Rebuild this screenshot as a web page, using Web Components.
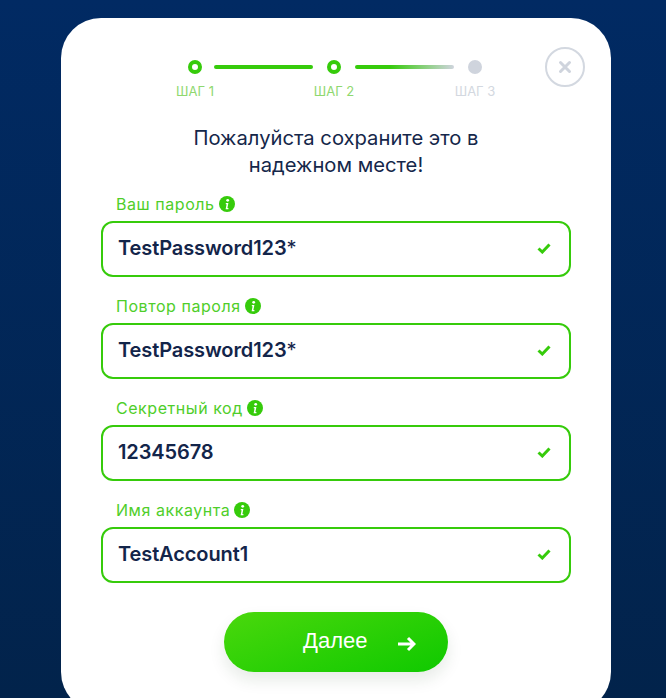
<!DOCTYPE html>
<html lang="ru">
<head>
<meta charset="utf-8">
<title>Шаг 2</title>
<style>
html, body {
    margin: 0;
    height: 698px;
    overflow: hidden;
}

body {
    background: linear-gradient(180deg, #012a63 0%, #02234b 100%);
    font-family: "Inter", "Noto Sans", sans-serif;
}
</style>
</head>
<body>
<wizard-card>
    <wizard-steps slot="top"></wizard-steps>
    <close-button slot="top"></close-button>
    <h-note>Пожалуйста сохраните это в<br>надежном месте!</h-note>
    <form-field label="Ваш пароль" value="TestPassword123" mark="*"></form-field>
    <form-field label="Повтор пароля" value="TestPassword123" mark="*"></form-field>
    <form-field label="Секретный код" value="12345678"></form-field>
    <form-field label="Имя аккаунта" value="TestAccount1"></form-field>
    <next-button>Далее</next-button>
</wizard-card>

<script>
const GREEN = "#36cb0b"

class WizardCard extends HTMLElement {
    constructor(){
        super();
        this.attachShadow({mode: "open"});
        this.shadowRoot.innerHTML = `<style>
:host {
    display: block;
    box-sizing: border-box;
    width: 550px;
    height: 694px;
    margin: 18px 0 0 61px;
    padding: 0 40px;
    background: #fff;
    border-radius: 40px;
}

.top {
    display: flex;
    justify-content: flex-end;
    height: 86px;
    padding-top: 29px;
    box-sizing: border-box;
}

.body {
    display: flex;
    flex-direction: column;
}
</style>
<div class="top"><slot name="top"></slot></div>
<div class="body"><slot></slot></div>`
    }
}

class WizardSteps extends HTMLElement {
    constructor(){
        super();
        this.attachShadow({mode: "open"});
        this.shadowRoot.innerHTML = `<style>
:host {
    display: grid;
    grid-template-columns: 14px 125px 14px 127px 14px;
    grid-template-rows: 14px auto;
    row-gap: 10px;
    align-items: center;
    justify-items: start;
    align-self: flex-start;
    margin: 13px 63px 0 0;
    font: 400 13px/15px "Inter", "Noto Sans", sans-serif;
}

.dot {
    box-sizing: border-box;
    width: 14px;
    height: 14px;
    border: 4px solid ${GREEN};
    border-radius: 50%;
}

.dot.off {
    border: 0;
    background: #cfd4dd;
}

.line {
    width: 99px;
    height: 4px;
    margin-left: 12px;
    border-radius: 2px;
    background: ${GREEN};
}

.line.fade {
    margin-left: 14px;
    background: linear-gradient(90deg, ${GREEN} 35%, #cfd4dd 100%);
}

.lbl {
    white-space: nowrap;
    color: #8fd86f;
    width: 14px;
    display: flex;
    justify-content: center;
}

.lbl.off {
    color: #d3d8e0;
}
</style>
<div class="dot"></div><div class="line"></div><div class="dot"></div><div class="line fade"></div><div class="dot off"></div>
<div class="lbl">ШАГ&nbsp;1</div><div></div><div class="lbl">ШАГ&nbsp;2</div><div></div><div class="lbl off">ШАГ&nbsp;3</div>`
    }
}

class CloseButton extends HTMLElement {
    constructor(){
        super();
        this.attachShadow({mode: "open"});
        this.shadowRoot.innerHTML = `<style>
:host {
    display: flex;
    align-items: center;
    justify-content: center;
    box-sizing: border-box;
    flex: none;
    width: 40px;
    height: 40px;
    margin: 0 -14px 0 0;
    border: 2px solid #d3d8e0;
    border-radius: 50%;
}
</style>
<svg width="14" height="14" viewBox="0 0 14 14"><path d="M2.5 2.5l9 9M11.5 2.5l-9 9" stroke="#cfd4dd" stroke-width="3" stroke-linecap="round" fill="none"/></svg>`
    }
}

class HNote extends HTMLElement {
    constructor(){
        super();
        this.attachShadow({mode: "open"});
        this.shadowRoot.innerHTML = `<style>
:host {
    display: block;
    height: 90px;
    padding-top: 20px;
    box-sizing: border-box;
    text-align: center;
    font: 400 20.2px/27px "Inter", "Noto Sans", sans-serif;
    color: #15274a;
}
</style>
<slot></slot>`
    }
}

class FormField extends HTMLElement {
    constructor(){
        super();
        this.attachShadow({mode: "open"});
        this.shadowRoot.innerHTML = `<style>
:host {
    display: block;
    margin-bottom: 19px;
}

.label {
    display: flex;
    align-items: center;
    gap: 4px;
    height: 20px;
    padding: 0 0 0 15px;
    margin-bottom: 7px;
    font: 400 16px/20px "Inter", "Noto Sans", sans-serif;
    letter-spacing: 0.55px;
    color: #4fce2a;
}

.box {
    display: flex;
    align-items: center;
    justify-content: space-between;
    box-sizing: border-box;
    height: 56px;
    padding: 0 18px 2px 15px;
    border: 2px solid ${GREEN};
    border-radius: 12px;
    font: 600 20px/24px "Inter", "Noto Sans", sans-serif;
    letter-spacing: -0.1px;
    color: #13254a;
}

#mark {
    font-weight: 400;
}
</style>
<div class="label"><span id="label"></span>
<svg width="16" height="16" viewBox="0 0 16 16"><circle cx="8" cy="8" r="8" fill="${GREEN}"/><circle cx="8.7" cy="4.3" r="1.4" fill="#fff"/><path d="M6.8 7h2.6l-1 5h1v1.2H6.6l1-5h-.8z" fill="#fff"/></svg></div>
<div class="box"><span><span id="value"></span><span id="mark"></span></span>
<svg width="14" height="11" viewBox="0 0 14 11"><path d="M1.5 5.5l3.8 3.5 7.2-7.5" stroke="${GREEN}" stroke-width="3" fill="none"/></svg></div>`
    }

    connectedCallback(){
        this.shadowRoot.getElementById("label").textContent = this.getAttribute("label")
        this.shadowRoot.getElementById("value").textContent = this.getAttribute("value")
        this.shadowRoot.getElementById("mark").textContent = this.getAttribute("mark") || ""
    }
}

class NextButton extends HTMLElement {
    constructor(){
        super();
        this.attachShadow({mode: "open"});
        this.shadowRoot.innerHTML = `<style>
:host {
    display: flex;
    align-items: center;
    align-self: center;
    box-sizing: border-box;
    width: 224px;
    height: 60px;
    margin-top: 10px;
    padding: 0 32px 0 79px;
    justify-content: space-between;
    border-radius: 30px;
    background: linear-gradient(160deg, #4ad80c 0%, #0fc900 100%);
    box-shadow: 0 8px 16px rgba(20, 60, 20, 0.1);
    font: 400 22px/26px "Liberation Sans", sans-serif;
    color: #fff;
}

span {
    margin-top: -3px;
}

svg {
    margin-top: 3px;
}
</style>
<span><slot></slot></span>
<svg width="19" height="16" viewBox="0 0 19 16"><path d="M1 8h16M11 2l6 6-6 6" stroke="#fff" stroke-width="3" fill="none"/></svg>`
    }
}

customElements.define("wizard-card", WizardCard)
customElements.define("wizard-steps", WizardSteps)
customElements.define("close-button", CloseButton)
customElements.define("h-note", HNote)
customElements.define("form-field", FormField)
customElements.define("next-button", NextButton)
</script>
</body>
</html>
